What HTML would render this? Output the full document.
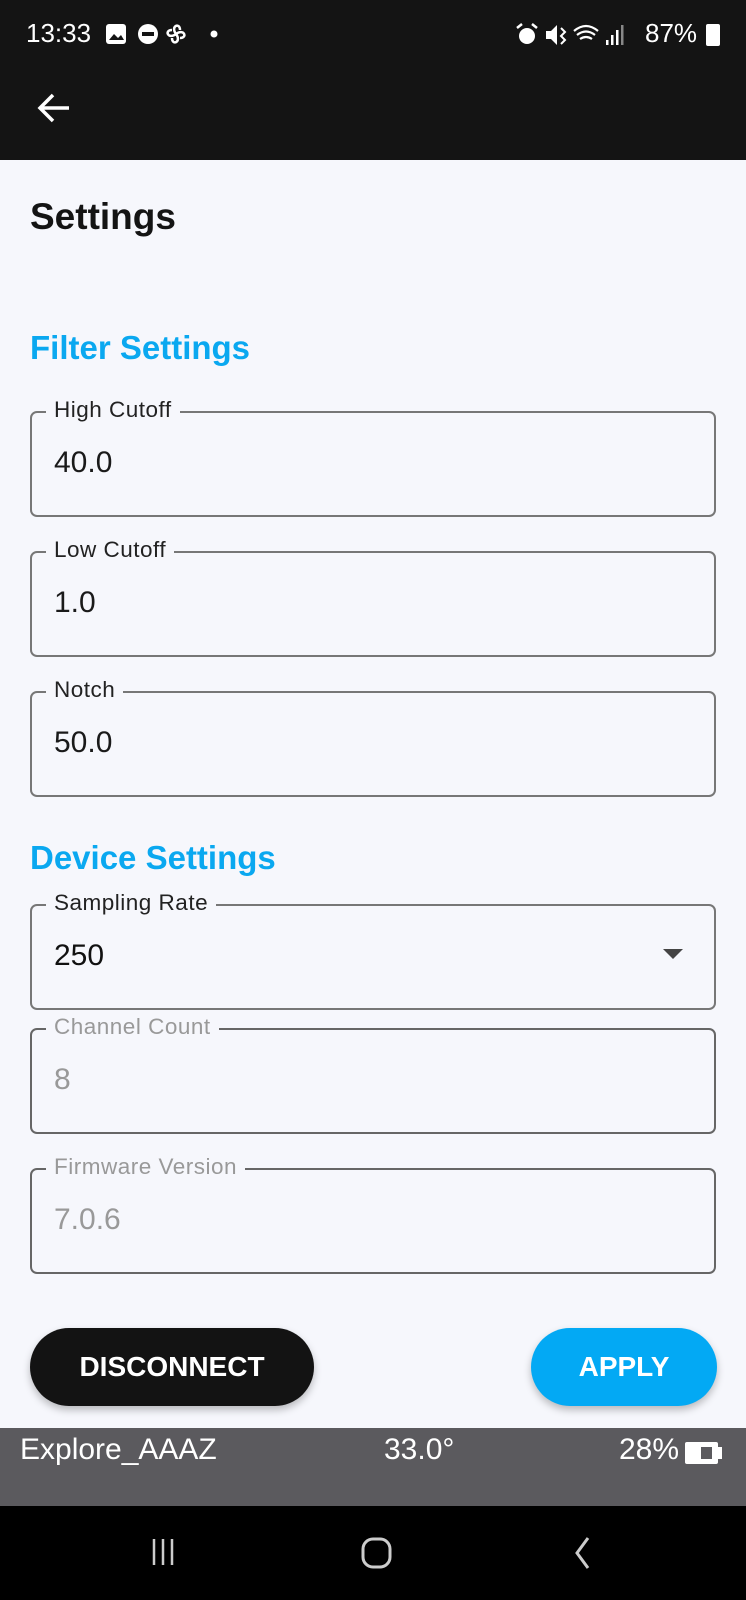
<!DOCTYPE html>
<html><head><meta charset="utf-8"><style>
*{margin:0;padding:0;box-sizing:border-box}
body{width:746px;height:1600px;background:#f6f7fc;font-family:"Liberation Sans",sans-serif;position:relative;overflow:hidden}
.a{position:absolute}
.top{left:0;top:0;width:746px;height:160px;background:#141414}
.st{color:#fff;font-size:26px}
h1{position:absolute;left:30px;top:196px;font-size:37px;font-weight:bold;color:#141414}
.sec{position:absolute;left:30px;font-size:33px;font-weight:bold;color:#0aa8f0}
.f{position:absolute;left:30px;width:686px;height:106px;border:2px solid #777;border-radius:7px}
.f .l{position:absolute;left:14px;top:-16px;background:#f6f7fc;padding:0 8px;font-size:22.5px;color:#222;letter-spacing:.5px}
.f .v{position:absolute;left:22px;top:33px;font-size:30px;color:#1a1a1a}
.f.d{border-color:#666}
.f.d .l,.f.d .v{color:#999}
.btn{position:absolute;top:1328px;height:78px;border-radius:39px;color:#fff;font-size:28px;font-weight:bold;display:flex;align-items:center;justify-content:center;box-shadow:0 4px 8px rgba(0,0,0,.25)}
</style></head><body>
<div class="a top"></div>
<div class="a st" style="left:26px;top:18px">13:33</div>
<svg class="a" style="left:104px;top:22px" width="120" height="26" viewBox="0 0 120 26"><rect x="2" y="2" width="20" height="20" rx="3" fill="#fff"/><path d="M5 18l5-6 4 4 3-3 3 5z" fill="#141414"/><circle cx="44" cy="12" r="10" fill="#fff"/><rect x="38" y="10" width="12" height="4" fill="#141414"/><path d="M72 12c-6-8 4-12 4-4M72 12c8-6 12 4 4 4M72 12c6 8-4 12-4 4M72 12c-8 6-12-4-4-4" stroke="#fff" stroke-width="2.5" fill="none"/><circle cx="110" cy="12" r="3.5" fill="#fff"/></svg>
<svg class="a" style="left:516px;top:22px" width="110" height="26" viewBox="0 0 110 26"><circle cx="11" cy="14" r="8" fill="#fff"/><path d="M1 6l5-4M21 6l-5-4" stroke="#fff" stroke-width="2.5"/><path d="M30 9h5l6-6v20l-6-6h-5z" fill="#fff"/><path d="M45 6l4 4-4 4 4 4-4 4" stroke="#fff" stroke-width="2" fill="none"/><path d="M58 9q12-10 24 0M61 13q9-7 18 0M64 17q6-4 12 0" stroke="#fff" stroke-width="2.2" fill="none"/><rect x="90" y="18" width="2.5" height="5" fill="#fff"/><rect x="95" y="13" width="2.5" height="10" fill="#fff"/><rect x="100" y="8" width="2.5" height="15" fill="#fff"/><rect x="105" y="3" width="2.5" height="20" fill="#888"/></svg>
<div class="a st" style="left:645px;top:18px">87%</div>
<div class="a" style="left:706px;top:24px;width:14px;height:22px;background:#fff;border-radius:2px"></div>
<svg class="a" style="left:36px;top:90px" width="36" height="36" viewBox="0 0 36 36"><path d="M33 18H5M17 5L4 18l13 13" stroke="#fff" stroke-width="3.5" fill="none"/></svg>
<h1>Settings</h1>
<div class="sec" style="top:329px">Filter Settings</div>
<div class="f" style="top:411px"><span class="l">High Cutoff</span><span class="v">40.0</span></div>
<div class="f" style="top:551px"><span class="l">Low Cutoff</span><span class="v">1.0</span></div>
<div class="f" style="top:691px"><span class="l">Notch</span><span class="v">50.0</span></div>
<div class="sec" style="top:839px">Device Settings</div>
<div class="f" style="top:904px"><span class="l">Sampling Rate</span><span class="v" style="color:#111">250</span><svg class="a" style="left:630px;top:42px" width="22" height="12"><path d="M1 1h20L11 11z" fill="#444"/></svg></div>
<div class="f d" style="top:1028px"><span class="l">Channel Count</span><span class="v">8</span></div>
<div class="f d" style="top:1168px"><span class="l">Firmware Version</span><span class="v">7.0.6</span></div>
<div class="btn" style="left:30px;width:284px;background:#131313">DISCONNECT</div>
<div class="btn" style="left:531px;width:186px;background:#03a9f4">APPLY</div>
<div class="a" style="left:0;top:1428px;width:746px;height:78px;background:#5b5a5e"></div>
<div class="a st" style="left:20px;top:1433px;font-size:30px">Explore_AAAZ</div>
<div class="a st" style="left:384px;top:1433px;font-size:30px">33.0°</div>
<div class="a st" style="left:619px;top:1433px;font-size:30px">28%</div>
<div class="a" style="left:685px;top:1442px;width:33px;height:22px;background:#fff;border-radius:2px"></div>
<div class="a" style="left:701px;top:1447px;width:11px;height:12px;background:#5b5a5e"></div>
<div class="a" style="left:718px;top:1447px;width:4px;height:12px;background:#fff"></div>
<div class="a" style="left:0;top:1506px;width:746px;height:94px;background:#000"></div>
<svg class="a" style="left:150px;top:1536px" width="450" height="36" viewBox="0 0 450 36"><path d="M4 3v26M13 3v26M22 3v26" stroke="#ccc" stroke-width="2.5"/><rect x="213" y="3" width="27" height="28" rx="10" stroke="#ccc" stroke-width="3" fill="none"/><path d="M438 2l-11 15 11 15" stroke="#ccc" stroke-width="3" fill="none"/></svg>
</body></html>
